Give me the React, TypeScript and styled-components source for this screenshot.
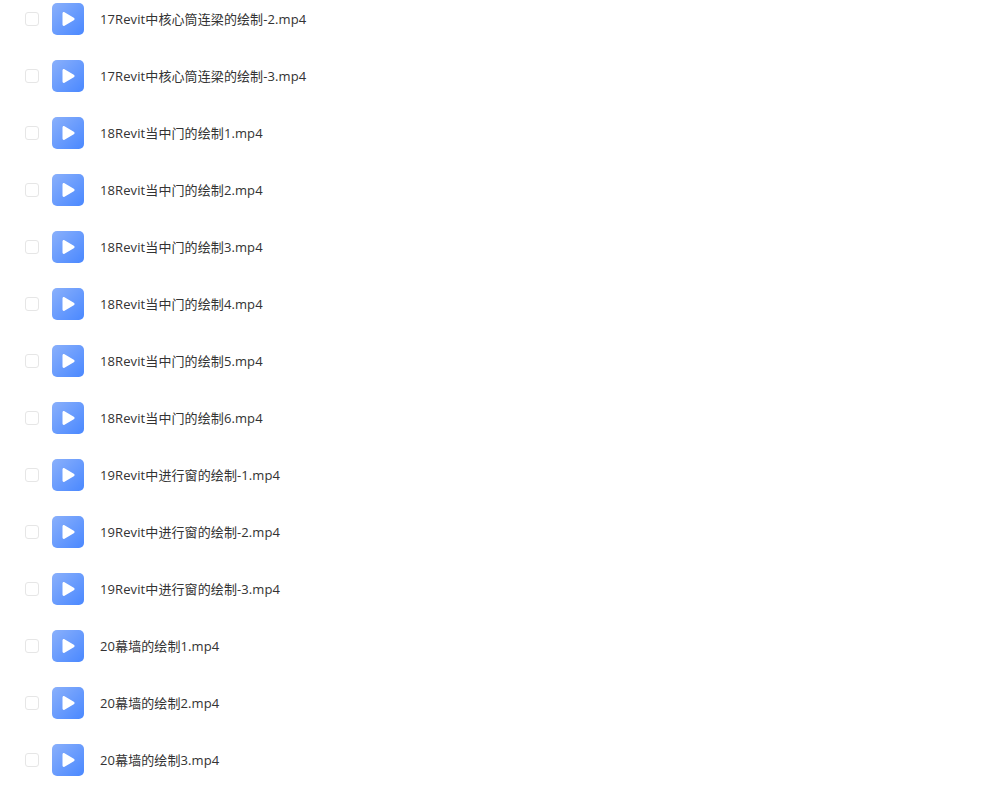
import React from "react";
import styled, { createGlobalStyle } from "styled-components";

const files = [
  "17Revit中核心筒连梁的绘制-2.mp4",
  "17Revit中核心筒连梁的绘制-3.mp4",
  "18Revit当中门的绘制1.mp4",
  "18Revit当中门的绘制2.mp4",
  "18Revit当中门的绘制3.mp4",
  "18Revit当中门的绘制4.mp4",
  "18Revit当中门的绘制5.mp4",
  "18Revit当中门的绘制6.mp4",
  "19Revit中进行窗的绘制-1.mp4",
  "19Revit中进行窗的绘制-2.mp4",
  "19Revit中进行窗的绘制-3.mp4",
  "20幕墙的绘制1.mp4",
  "20幕墙的绘制2.mp4",
  "20幕墙的绘制3.mp4",
];

function App() {
  return (
    <>
      <GlobalStyle />
      <List>
        {files.map((name) => (
          <Row key={name}>
            <Checkbox />
            <Thumb>
              <svg width="18" height="18" viewBox="0 0 18 18">
                <path
                  d="M3.5 3.4c0-1.2 1-1.8 2-1.2l9.3 5.5c1 .6 1 2 0 2.6l-9.3 5.5c-1 .6-2 0-2-1.2z"
                  fill="#fff"
                />
              </svg>
            </Thumb>
            <Name>{name}</Name>
          </Row>
        ))}
      </List>
    </>
  );
}

const GlobalStyle = createGlobalStyle`
  html, body {
    margin: 0;
    height: 794px;
    overflow: hidden;
    background: #fff;
  }
`;

const List = styled.div`
  margin-top: -10px;
  padding-left: 25px;
`;

const Row = styled.div`
  display: flex;
  align-items: center;
  height: 57px;
`;

const Checkbox = styled.span`
  box-sizing: border-box;
  width: 14px;
  height: 14px;
  border: 1px solid #e6e6e6;
  border-radius: 3px;
  background: #fff;
`;

const Thumb = styled.div`
  display: flex;
  align-items: center;
  justify-content: center;
  width: 32px;
  height: 32px;
  margin-left: 13px;
  border-radius: 5px;
  background: linear-gradient(135deg, #8ab0fb 0%, #4a88ff 100%);
`;

const Name = styled.span`
  margin-left: 16px;
  font-family: "Open Sans", "Noto Sans CJK SC", sans-serif;
  font-size: 13px;
  letter-spacing: 0.1px;
  color: #333;
  white-space: nowrap;
`;

export default App;
